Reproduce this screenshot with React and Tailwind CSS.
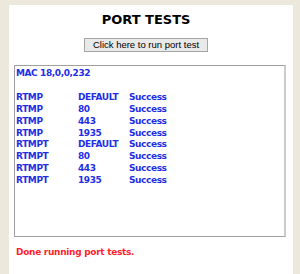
export default function App() {
  const rows = [
    ['RTMP', 'DEFAULT', 'Success'],
    ['RTMP', '80', 'Success'],
    ['RTMP', '443', 'Success'],
    ['RTMP', '1935', 'Success'],
    ['RTMPT', 'DEFAULT', 'Success'],
    ['RTMPT', '80', 'Success'],
    ['RTMPT', '443', 'Success'],
    ['RTMPT', '1935', 'Success'],
  ];

  return (
    <div className="w-[300px] h-[274px] bg-[#ece9dc] pt-[5px] px-[9px] overflow-hidden font-['DejaVu_Sans',Verdana,sans-serif]">
      <div className="bg-white h-[269px] w-[284px] pt-[7px]">
        <div className="flex flex-col items-center pr-[10px]">
          <h1 className="text-[13px] font-bold leading-[15px] text-black">PORT TESTS</h1>
          <button className="mt-[11px] w-[124px] h-[14px] bg-[#e9e9e9] border border-[#a5a5a5] text-[9.5px] leading-none text-black font-['Liberation_Sans',Arial,sans-serif]">
            Click here to run port test
          </button>
        </div>
        <div className="mt-[13px] ml-[5px] w-[272px] h-[172px] border border-[#a0a0a0] border-r-2 border-r-[#cccccc] pl-[1px] pt-[2px] text-[9px] leading-[11.9px] font-bold tracking-[-0.4px] text-[#1f2ee6]">
          <div>MAC 18,0,0,232</div>
          <div className="h-[11.9px]" />
          {rows.map((r, i) => (
            <div key={i} className="grid grid-cols-[62px_51px_auto]">
              <span>{r[0]}</span>
              <span>{r[1]}</span>
              <span>{r[2]}</span>
            </div>
          ))}
        </div>
        <p className="ml-[7px] mt-[10px] text-[9px] leading-[11.7px] font-bold tracking-[-0.3px] text-[#ff1f2f]">Done running port tests.</p>
      </div>
    </div>
  );
}
